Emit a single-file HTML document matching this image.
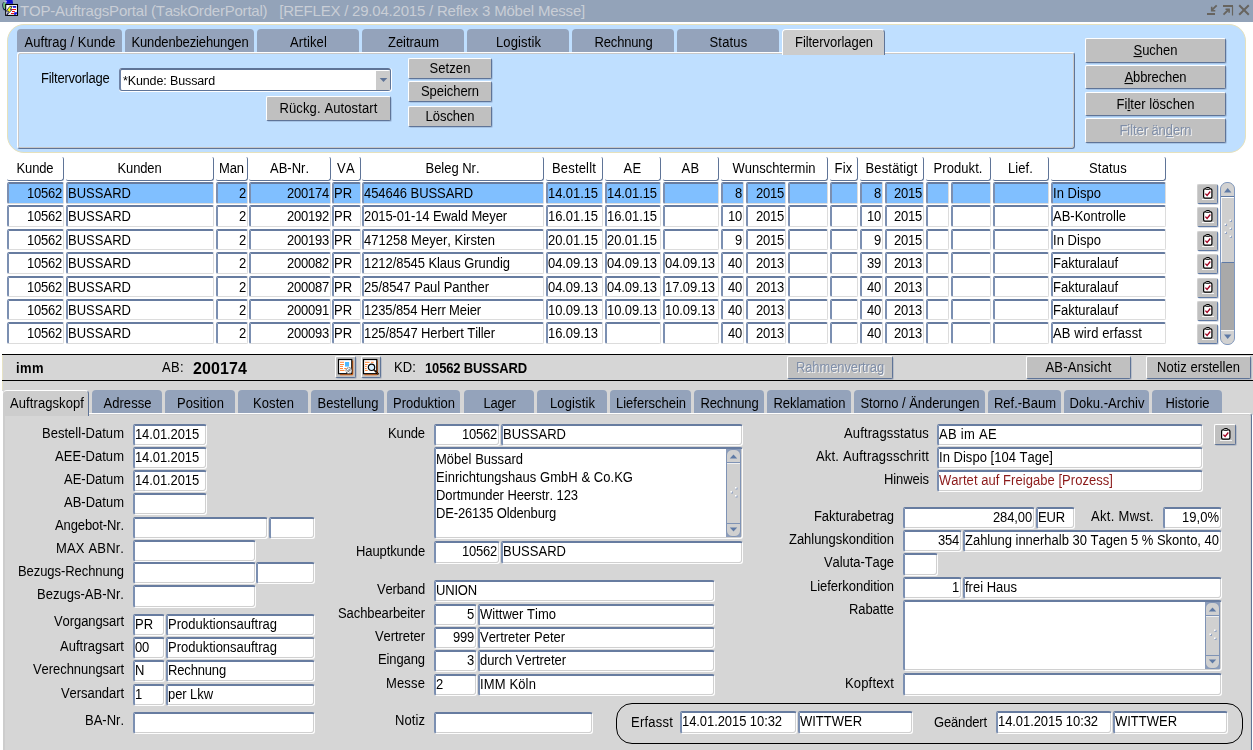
<!DOCTYPE html><html><head><meta charset="utf-8"><title>TOP-AuftragsPortal</title><style>
*{box-sizing:border-box;margin:0;padding:0}
html,body{width:1253px;height:750px;overflow:hidden;background:#fff}
body{font-kerning:none;font-family:"Liberation Sans",sans-serif;font-size:13px;color:#000;position:relative}
.a{position:absolute;white-space:nowrap;overflow:hidden}
.t{position:absolute;white-space:nowrap;line-height:16px;height:16px;transform:scaleY(1.065);transform-origin:0 12.5px}
.f{position:absolute;white-space:nowrap;overflow:hidden;background:#fff;border-top:2px solid #677ca0;border-left:2px solid #7b8fb1;border-right:1px solid #fdfdfd;border-bottom:1px solid #fdfdfd;border-radius:2px 3px 3px 3px;line-height:18px;padding:0 2px 0 0;box-shadow:inset -1px -1px 0 #d0d0d0}
.f.r{text-align:right}
.f.s{background:#80bfff}
.c{position:absolute;white-space:nowrap;overflow:hidden;background:#fff;border-top:2px solid #677ca0;border-left:2px solid #7b8fb1;border-right:1px solid #dcdcdc;border-bottom:1px solid #dcdcdc;border-radius:2px;line-height:19px;padding:0 1px 0 0}
.c.r{text-align:right}
.c.s{background:#80bfff}
.h{position:absolute;white-space:nowrap;overflow:hidden;text-align:center;line-height:24px;border-right:1px solid #5f7497;border-bottom:1px solid #5f7497;border-radius:0 2px 3px 2px}
.b{position:absolute;white-space:nowrap;text-align:center;background:#c0c0c0;border-top:1px solid #fff;border-left:1px solid #fff;border-right:1px solid #5f7497;border-bottom:1px solid #5f7497;border-radius:2px;box-shadow:1px 1px 0 rgba(95,116,151,.25)}
.b.d{color:#7f8ea8;text-shadow:1px 1px 0 #f4f4f4}
.tab{position:absolute;white-space:nowrap;overflow:hidden;text-align:center;padding-left:1px;background:#94a3bb;border-radius:4px 4px 0 0}
.tab.sel{background:#cdcdcd}
u{text-decoration:underline}
.y{display:inline-block;line-height:16px;transform:scaleY(1.065);transform-origin:0 12.5px}
</style></head><body>
<div class="a" style="left:0px;top:0px;width:1253px;height:22px;background:#93a3b9"></div>
<div class="a" style="left:20px;top:0;height:22px;line-height:21px;font-size:15px;color:#c9ced6;letter-spacing:-0.214px;">TOP-AuftragsPortal (TaskOrderPortal)   [REFLEX / 29.04.2015 / Reflex 3 Möbel Messe]</div>
<svg class="a" style="left:0;top:0;width:20px;height:18px" viewBox="0 0 20 18"><path d="M3 2.5C1.8 4 2 7.5 4 10.5l2-1V2z" fill="#101040"/><path d="M3.4 3C5 1.2 6 2 6 3v5.5L4.2 9C3 7 2.8 4.5 3.4 3z" fill="#70c080"/><path d="M5.5 0h7l.6 3.8H6z" fill="#1010d0"/><path d="M4 1.2l2-.9 1.2 1.2L6 3z" fill="#b8b0e8"/><rect x="5.7" y="4.5" width="11.8" height="10.9" fill="#fff" stroke="#000" stroke-width="1.1"/><rect x="13" y="6.1" width="3.2" height="1.6" fill="#0000d8"/><rect x="12" y="9" width="4" height="1" fill="#f01010"/><rect x="12" y="11" width="2.8" height="1" fill="#f01010"/><rect x="11" y="13" width="3" height="1" fill="#f01010"/><rect x="14.2" y="12.3" width="2.8" height="2.6" fill="#0000d8"/><rect x="15.8" y="13.8" width="1" height="1" fill="#fff"/><path d="M9.8 6.4h2.4L10.4 9.6H12L6.8 15.2 8.6 11.2H6.2z" fill="#ffff00" stroke="#101070" stroke-width=".8"/></svg>
<svg class="a" style="left:1205px;top:3px;width:46px;height:14px" viewBox="0 0 46 14"><g stroke="#67645f" fill="none"><path d="M2 11h8" stroke-width="2"/><path d="M11.7 2.3L6.8 7.2" stroke-width="1.8"/><path d="M6.7 3.8v3.9h3.6" stroke-width="1.6"/><path d="M18 3h10" stroke-width="2"/><path d="M27.5 3v9.5" stroke-width="1.2"/><path d="M18.5 11.7l5.2-5.2" stroke-width="1.8"/><path d="M20.5 6.2h3.6v3.6" stroke-width="1.6"/><path d="M34.2 2.2l9.6 9.6M43.8 2.2l-9.6 9.6" stroke-width="2"/></g></svg>
<div class="a" style="left:7px;top:24px;width:1239px;height:129px;background:#bfdfff;border-radius:17px;border:1px solid #e6e1bc"></div>
<div class="tab" style="left:17px;top:29px;width:105px;height:23px;letter-spacing:0.044px;line-height:27px"><span class="y">Auftrag / Kunde</span></div>
<div class="tab" style="left:125px;top:29px;width:129px;height:23px;letter-spacing:-0.134px;line-height:27px"><span class="y">Kundenbeziehungen</span></div>
<div class="tab" style="left:257px;top:29px;width:102px;height:23px;letter-spacing:0.126px;line-height:27px"><span class="y">Artikel</span></div>
<div class="tab" style="left:362px;top:29px;width:102px;height:23px;letter-spacing:-0.036px;line-height:27px"><span class="y">Zeitraum</span></div>
<div class="tab" style="left:467px;top:29px;width:102px;height:23px;letter-spacing:0.115px;line-height:27px"><span class="y">Logistik</span></div>
<div class="tab" style="left:572px;top:29px;width:102px;height:23px;letter-spacing:-0.159px;line-height:27px"><span class="y">Rechnung</span></div>
<div class="tab" style="left:677px;top:29px;width:102px;height:23px;letter-spacing:0.191px;line-height:27px"><span class="y">Status</span></div>
<div class="a" style="left:17px;top:52px;width:1058px;height:97px;border-top:1px solid #fff;border-left:1px solid #fff;border-right:1px solid #5f7497;border-bottom:1px solid #5f7497;border-radius:3px;box-shadow:inset 1px 1px 0 #c8c8c8,inset -1px -1px 0 #c8c8c8"></div>
<div class="tab sel" style="left:782px;top:29px;width:103px;height:26px;letter-spacing:-0.054px;line-height:26px;border-top:1px solid #fff;border-left:1px solid #fff;border-right:1px solid #5f7497;background:#cccccc"><span class="y">Filtervorlagen</span></div>
<div class="t" style="left:41px;top:71.0px;letter-spacing:-0.233px;">Filtervorlage</div>
<div class="a" style="left:119px;top:68px;width:273px;height:24px;background:#fff;border-radius:3px"></div>
<div class="a" style="left:119px;top:68px;width:272px;height:23px;letter-spacing:-0.121px;background:#fff;border-top:2px solid #5f7497;border-left:2px solid #6f83a6;border-right:1px solid #5f7497;border-bottom:1px solid #5f7497;border-radius:3px;line-height:22px;padding-left:2px;font-size:12.5px"><span class="y">*Kunde: Bussard</span></div>
<div class="a" style="left:376px;top:71px;width:14px;height:19px;background:#cbcbcb"></div>
<svg class="a" style="left:379px;top:77px;width:9px;height:6px" viewBox="0 0 9 6"><path d="M0.7 0.9h7.6L4.5 5z" fill="#5f7497"/></svg>
<div class="b" style="left:266px;top:96px;width:125px;height:25px;letter-spacing:0.119px;line-height:24px"><span class="y">Rückg. Autostart</span></div>
<div class="b" style="left:408px;top:58px;width:84px;height:21px;letter-spacing:0.088px;line-height:20px"><span class="y">Setzen</span></div>
<div class="b" style="left:408px;top:81px;width:84px;height:21px;letter-spacing:-0.060px;line-height:20px"><span class="y">Speichern</span></div>
<div class="b" style="left:408px;top:106px;width:84px;height:21px;letter-spacing:-0.021px;line-height:20px"><span class="y">Löschen</span></div>
<div class="b" style="left:1085px;top:38px;width:141px;height:25px;letter-spacing:-0.015px;line-height:23px"><span class="y"><u>S</u>uchen</span></div>
<div class="b" style="left:1085px;top:65px;width:141px;height:24px;letter-spacing:-0.098px;line-height:23px"><span class="y"><u>A</u>bbrechen</span></div>
<div class="b" style="left:1085px;top:92px;width:141px;height:24px;letter-spacing:0.049px;line-height:23px"><span class="y">Fi<u>l</u>ter löschen</span></div>
<div class="b d" style="left:1085px;top:118px;width:141px;height:25px;letter-spacing:-0.075px;line-height:23px"><span class="y">Filter än<u>d</u>ern</span></div>
<div class="h" style="left:7px;top:157px;width:57px;height:24px;letter-spacing:-0.118px;"><span class="y">Kunde</span></div>
<div class="h" style="left:66px;top:157px;width:148px;height:24px;letter-spacing:-0.137px;"><span class="y">Kunden</span></div>
<div class="h" style="left:216px;top:157px;width:32px;height:24px;letter-spacing:-0.096px;"><span class="y">Man</span></div>
<div class="h" style="left:249px;top:157px;width:82px;height:24px;letter-spacing:0.000px;"><span class="y">AB-Nr.</span></div>
<div class="h" style="left:332px;top:157px;width:29px;height:24px;letter-spacing:0.329px;"><span class="y">VA</span></div>
<div class="h" style="left:362px;top:157px;width:182px;height:24px;letter-spacing:-0.021px;"><span class="y">Beleg Nr.</span></div>
<div class="h" style="left:546px;top:157px;width:57px;height:24px;letter-spacing:0.171px;"><span class="y">Bestellt</span></div>
<div class="h" style="left:605px;top:157px;width:56px;height:24px;letter-spacing:0.329px;"><span class="y">AE</span></div>
<div class="h" style="left:663px;top:157px;width:56px;height:24px;letter-spacing:0.329px;"><span class="y">AB</span></div>
<div class="h" style="left:721px;top:157px;width:107px;height:24px;letter-spacing:-0.007px;"><span class="y">Wunschtermin</span></div>
<div class="h" style="left:830px;top:157px;width:28px;height:24px;letter-spacing:0.224px;"><span class="y">Fix</span></div>
<div class="h" style="left:860px;top:157px;width:64px;height:24px;letter-spacing:0.157px;"><span class="y">Bestätigt</span></div>
<div class="h" style="left:926px;top:157px;width:65px;height:24px;letter-spacing:0.073px;"><span class="y">Produkt.</span></div>
<div class="h" style="left:993px;top:157px;width:56px;height:24px;letter-spacing:0.086px;"><span class="y">Lief.</span></div>
<div class="h" style="left:1051px;top:157px;width:115px;height:24px;letter-spacing:0.191px;"><span class="y">Status</span></div>
<div class="c r s" style="left:7px;top:182px;width:57px;height:22px;letter-spacing:-0.230px;"><span class="y">10562</span></div>
<div class="c  s" style="left:66px;top:182px;width:148px;height:22px;letter-spacing:0.022px;"><span class="y">BUSSARD</span></div>
<div class="c r s" style="left:216px;top:182px;width:32px;height:22px;letter-spacing:-0.230px;"><span class="y">2</span></div>
<div class="c r s" style="left:249px;top:182px;width:82px;height:22px;letter-spacing:-0.230px;"><span class="y">200174</span></div>
<div class="c  s" style="left:332px;top:182px;width:29px;height:22px;letter-spacing:-0.030px;"><span class="y">PR</span></div>
<div class="c  s" style="left:362px;top:182px;width:182px;height:22px;letter-spacing:-0.060px;"><span class="y">454646 BUSSARD</span></div>
<div class="c  s" style="left:546px;top:182px;width:57px;height:22px;letter-spacing:-0.075px;"><span class="y">14.01.15</span></div>
<div class="c  s" style="left:605px;top:182px;width:56px;height:22px;letter-spacing:-0.075px;"><span class="y">14.01.15</span></div>
<div class="c  s" style="left:663px;top:182px;width:56px;height:22px;"></div>
<div class="c r s" style="left:721px;top:182px;width:23px;height:22px;letter-spacing:-0.230px;"><span class="y">8</span></div>
<div class="c r s" style="left:746px;top:182px;width:40px;height:22px;letter-spacing:-0.230px;"><span class="y">2015</span></div>
<div class="c  s" style="left:788px;top:182px;width:40px;height:22px;"></div>
<div class="c  s" style="left:830px;top:182px;width:28px;height:22px;"></div>
<div class="c r s" style="left:860px;top:182px;width:23px;height:22px;letter-spacing:-0.230px;"><span class="y">8</span></div>
<div class="c r s" style="left:885px;top:182px;width:39px;height:22px;letter-spacing:-0.230px;"><span class="y">2015</span></div>
<div class="c  s" style="left:926px;top:182px;width:23px;height:22px;"></div>
<div class="c  s" style="left:951px;top:182px;width:40px;height:22px;"></div>
<div class="c  s" style="left:993px;top:182px;width:56px;height:22px;"></div>
<div class="c  s" style="left:1051px;top:182px;width:115px;height:22px;letter-spacing:0.039px;"><span class="y">In Dispo</span></div>
<div class="b" style="left:1197px;top:184px;width:21px;height:20px;border-top-color:#d0d0d0;border-left-color:#d0d0d0;border-right:1px solid #5f7aa5;border-bottom:1px solid #5f7aa5"></div>
<svg class="a" style="left:1202px;top:187px;width:12px;height:13px" viewBox="0 0 12 13"><path d="M0 12.5h12" stroke="#f4f4f4"/><rect x="1.6" y="1.9" width="8.3" height="9.2" rx="1.3" fill="#fff" stroke="#000" stroke-width="1.2"/><rect x="3.7" y="0.5" width="4.1" height="1.7" rx=".8" fill="#fff" stroke="#000" stroke-width="1"/><path d="M3.4 6.6l1.7 1.9 3.2-4" fill="none" stroke="#a00020" stroke-width="1.3"/></svg>
<div class="c r" style="left:7px;top:205px;width:57px;height:22px;letter-spacing:-0.230px;"><span class="y">10562</span></div>
<div class="c " style="left:66px;top:205px;width:148px;height:22px;letter-spacing:0.022px;"><span class="y">BUSSARD</span></div>
<div class="c r" style="left:216px;top:205px;width:32px;height:22px;letter-spacing:-0.230px;"><span class="y">2</span></div>
<div class="c r" style="left:249px;top:205px;width:82px;height:22px;letter-spacing:-0.230px;"><span class="y">200192</span></div>
<div class="c " style="left:332px;top:205px;width:29px;height:22px;letter-spacing:-0.030px;"><span class="y">PR</span></div>
<div class="c " style="left:362px;top:205px;width:182px;height:22px;letter-spacing:-0.102px;"><span class="y">2015-01-14 Ewald Meyer</span></div>
<div class="c " style="left:546px;top:205px;width:57px;height:22px;letter-spacing:-0.075px;"><span class="y">16.01.15</span></div>
<div class="c " style="left:605px;top:205px;width:56px;height:22px;letter-spacing:-0.075px;"><span class="y">16.01.15</span></div>
<div class="c " style="left:663px;top:205px;width:56px;height:22px;"></div>
<div class="c r" style="left:721px;top:205px;width:23px;height:22px;letter-spacing:-0.230px;"><span class="y">10</span></div>
<div class="c r" style="left:746px;top:205px;width:40px;height:22px;letter-spacing:-0.230px;"><span class="y">2015</span></div>
<div class="c " style="left:788px;top:205px;width:40px;height:22px;"></div>
<div class="c " style="left:830px;top:205px;width:28px;height:22px;"></div>
<div class="c r" style="left:860px;top:205px;width:23px;height:22px;letter-spacing:-0.230px;"><span class="y">10</span></div>
<div class="c r" style="left:885px;top:205px;width:39px;height:22px;letter-spacing:-0.230px;"><span class="y">2015</span></div>
<div class="c " style="left:926px;top:205px;width:23px;height:22px;"></div>
<div class="c " style="left:951px;top:205px;width:40px;height:22px;"></div>
<div class="c " style="left:993px;top:205px;width:56px;height:22px;"></div>
<div class="c " style="left:1051px;top:205px;width:115px;height:22px;letter-spacing:0.002px;"><span class="y">AB-Kontrolle</span></div>
<div class="b" style="left:1197px;top:207px;width:21px;height:20px;border-top-color:#d0d0d0;border-left-color:#d0d0d0;border-right:1px solid #5f7aa5;border-bottom:1px solid #5f7aa5"></div>
<svg class="a" style="left:1202px;top:210px;width:12px;height:13px" viewBox="0 0 12 13"><path d="M0 12.5h12" stroke="#f4f4f4"/><rect x="1.6" y="1.9" width="8.3" height="9.2" rx="1.3" fill="#fff" stroke="#000" stroke-width="1.2"/><rect x="3.7" y="0.5" width="4.1" height="1.7" rx=".8" fill="#fff" stroke="#000" stroke-width="1"/><path d="M3.4 6.6l1.7 1.9 3.2-4" fill="none" stroke="#a00020" stroke-width="1.3"/></svg>
<div class="c r" style="left:7px;top:229px;width:57px;height:21px;letter-spacing:-0.230px;"><span class="y">10562</span></div>
<div class="c " style="left:66px;top:229px;width:148px;height:21px;letter-spacing:0.022px;"><span class="y">BUSSARD</span></div>
<div class="c r" style="left:216px;top:229px;width:32px;height:21px;letter-spacing:-0.230px;"><span class="y">2</span></div>
<div class="c r" style="left:249px;top:229px;width:82px;height:21px;letter-spacing:-0.230px;"><span class="y">200193</span></div>
<div class="c " style="left:332px;top:229px;width:29px;height:21px;letter-spacing:-0.030px;"><span class="y">PR</span></div>
<div class="c " style="left:362px;top:229px;width:182px;height:21px;letter-spacing:0.010px;"><span class="y">471258 Meyer, Kirsten</span></div>
<div class="c " style="left:546px;top:229px;width:57px;height:21px;letter-spacing:-0.075px;"><span class="y">20.01.15</span></div>
<div class="c " style="left:605px;top:229px;width:56px;height:21px;letter-spacing:-0.075px;"><span class="y">20.01.15</span></div>
<div class="c " style="left:663px;top:229px;width:56px;height:21px;"></div>
<div class="c r" style="left:721px;top:229px;width:23px;height:21px;letter-spacing:-0.230px;"><span class="y">9</span></div>
<div class="c r" style="left:746px;top:229px;width:40px;height:21px;letter-spacing:-0.230px;"><span class="y">2015</span></div>
<div class="c " style="left:788px;top:229px;width:40px;height:21px;"></div>
<div class="c " style="left:830px;top:229px;width:28px;height:21px;"></div>
<div class="c r" style="left:860px;top:229px;width:23px;height:21px;letter-spacing:-0.230px;"><span class="y">9</span></div>
<div class="c r" style="left:885px;top:229px;width:39px;height:21px;letter-spacing:-0.230px;"><span class="y">2015</span></div>
<div class="c " style="left:926px;top:229px;width:23px;height:21px;"></div>
<div class="c " style="left:951px;top:229px;width:40px;height:21px;"></div>
<div class="c " style="left:993px;top:229px;width:56px;height:21px;"></div>
<div class="c " style="left:1051px;top:229px;width:115px;height:21px;letter-spacing:0.039px;"><span class="y">In Dispo</span></div>
<div class="b" style="left:1197px;top:231px;width:21px;height:20px;border-top-color:#d0d0d0;border-left-color:#d0d0d0;border-right:1px solid #5f7aa5;border-bottom:1px solid #5f7aa5"></div>
<svg class="a" style="left:1202px;top:234px;width:12px;height:13px" viewBox="0 0 12 13"><path d="M0 12.5h12" stroke="#f4f4f4"/><rect x="1.6" y="1.9" width="8.3" height="9.2" rx="1.3" fill="#fff" stroke="#000" stroke-width="1.2"/><rect x="3.7" y="0.5" width="4.1" height="1.7" rx=".8" fill="#fff" stroke="#000" stroke-width="1"/><path d="M3.4 6.6l1.7 1.9 3.2-4" fill="none" stroke="#a00020" stroke-width="1.3"/></svg>
<div class="c r" style="left:7px;top:252px;width:57px;height:22px;letter-spacing:-0.230px;"><span class="y">10562</span></div>
<div class="c " style="left:66px;top:252px;width:148px;height:22px;letter-spacing:0.022px;"><span class="y">BUSSARD</span></div>
<div class="c r" style="left:216px;top:252px;width:32px;height:22px;letter-spacing:-0.230px;"><span class="y">2</span></div>
<div class="c r" style="left:249px;top:252px;width:82px;height:22px;letter-spacing:-0.230px;"><span class="y">200082</span></div>
<div class="c " style="left:332px;top:252px;width:29px;height:22px;letter-spacing:-0.030px;"><span class="y">PR</span></div>
<div class="c " style="left:362px;top:252px;width:182px;height:22px;letter-spacing:-0.063px;"><span class="y">1212/8545 Klaus Grundig</span></div>
<div class="c " style="left:546px;top:252px;width:57px;height:22px;letter-spacing:-0.075px;"><span class="y">04.09.13</span></div>
<div class="c " style="left:605px;top:252px;width:56px;height:22px;letter-spacing:-0.075px;"><span class="y">04.09.13</span></div>
<div class="c " style="left:663px;top:252px;width:56px;height:22px;letter-spacing:-0.075px;"><span class="y">04.09.13</span></div>
<div class="c r" style="left:721px;top:252px;width:23px;height:22px;letter-spacing:-0.230px;"><span class="y">40</span></div>
<div class="c r" style="left:746px;top:252px;width:40px;height:22px;letter-spacing:-0.230px;"><span class="y">2013</span></div>
<div class="c " style="left:788px;top:252px;width:40px;height:22px;"></div>
<div class="c " style="left:830px;top:252px;width:28px;height:22px;"></div>
<div class="c r" style="left:860px;top:252px;width:23px;height:22px;letter-spacing:-0.230px;"><span class="y">39</span></div>
<div class="c r" style="left:885px;top:252px;width:39px;height:22px;letter-spacing:-0.230px;"><span class="y">2013</span></div>
<div class="c " style="left:926px;top:252px;width:23px;height:22px;"></div>
<div class="c " style="left:951px;top:252px;width:40px;height:22px;"></div>
<div class="c " style="left:993px;top:252px;width:56px;height:22px;"></div>
<div class="c " style="left:1051px;top:252px;width:115px;height:22px;letter-spacing:-0.003px;"><span class="y">Fakturalauf</span></div>
<div class="b" style="left:1197px;top:254px;width:21px;height:20px;border-top-color:#d0d0d0;border-left-color:#d0d0d0;border-right:1px solid #5f7aa5;border-bottom:1px solid #5f7aa5"></div>
<svg class="a" style="left:1202px;top:257px;width:12px;height:13px" viewBox="0 0 12 13"><path d="M0 12.5h12" stroke="#f4f4f4"/><rect x="1.6" y="1.9" width="8.3" height="9.2" rx="1.3" fill="#fff" stroke="#000" stroke-width="1.2"/><rect x="3.7" y="0.5" width="4.1" height="1.7" rx=".8" fill="#fff" stroke="#000" stroke-width="1"/><path d="M3.4 6.6l1.7 1.9 3.2-4" fill="none" stroke="#a00020" stroke-width="1.3"/></svg>
<div class="c r" style="left:7px;top:276px;width:57px;height:21px;letter-spacing:-0.230px;"><span class="y">10562</span></div>
<div class="c " style="left:66px;top:276px;width:148px;height:21px;letter-spacing:0.022px;"><span class="y">BUSSARD</span></div>
<div class="c r" style="left:216px;top:276px;width:32px;height:21px;letter-spacing:-0.230px;"><span class="y">2</span></div>
<div class="c r" style="left:249px;top:276px;width:82px;height:21px;letter-spacing:-0.230px;"><span class="y">200087</span></div>
<div class="c " style="left:332px;top:276px;width:29px;height:21px;letter-spacing:-0.030px;"><span class="y">PR</span></div>
<div class="c " style="left:362px;top:276px;width:182px;height:21px;letter-spacing:-0.038px;"><span class="y">25/8547 Paul Panther</span></div>
<div class="c " style="left:546px;top:276px;width:57px;height:21px;letter-spacing:-0.075px;"><span class="y">04.09.13</span></div>
<div class="c " style="left:605px;top:276px;width:56px;height:21px;letter-spacing:-0.075px;"><span class="y">04.09.13</span></div>
<div class="c " style="left:663px;top:276px;width:56px;height:21px;letter-spacing:-0.075px;"><span class="y">17.09.13</span></div>
<div class="c r" style="left:721px;top:276px;width:23px;height:21px;letter-spacing:-0.230px;"><span class="y">40</span></div>
<div class="c r" style="left:746px;top:276px;width:40px;height:21px;letter-spacing:-0.230px;"><span class="y">2013</span></div>
<div class="c " style="left:788px;top:276px;width:40px;height:21px;"></div>
<div class="c " style="left:830px;top:276px;width:28px;height:21px;"></div>
<div class="c r" style="left:860px;top:276px;width:23px;height:21px;letter-spacing:-0.230px;"><span class="y">40</span></div>
<div class="c r" style="left:885px;top:276px;width:39px;height:21px;letter-spacing:-0.230px;"><span class="y">2013</span></div>
<div class="c " style="left:926px;top:276px;width:23px;height:21px;"></div>
<div class="c " style="left:951px;top:276px;width:40px;height:21px;"></div>
<div class="c " style="left:993px;top:276px;width:56px;height:21px;"></div>
<div class="c " style="left:1051px;top:276px;width:115px;height:21px;letter-spacing:-0.003px;"><span class="y">Fakturalauf</span></div>
<div class="b" style="left:1197px;top:278px;width:21px;height:20px;border-top-color:#d0d0d0;border-left-color:#d0d0d0;border-right:1px solid #5f7aa5;border-bottom:1px solid #5f7aa5"></div>
<svg class="a" style="left:1202px;top:281px;width:12px;height:13px" viewBox="0 0 12 13"><path d="M0 12.5h12" stroke="#f4f4f4"/><rect x="1.6" y="1.9" width="8.3" height="9.2" rx="1.3" fill="#fff" stroke="#000" stroke-width="1.2"/><rect x="3.7" y="0.5" width="4.1" height="1.7" rx=".8" fill="#fff" stroke="#000" stroke-width="1"/><path d="M3.4 6.6l1.7 1.9 3.2-4" fill="none" stroke="#a00020" stroke-width="1.3"/></svg>
<div class="c r" style="left:7px;top:299px;width:57px;height:21px;letter-spacing:-0.230px;"><span class="y">10562</span></div>
<div class="c " style="left:66px;top:299px;width:148px;height:21px;letter-spacing:0.022px;"><span class="y">BUSSARD</span></div>
<div class="c r" style="left:216px;top:299px;width:32px;height:21px;letter-spacing:-0.230px;"><span class="y">2</span></div>
<div class="c r" style="left:249px;top:299px;width:82px;height:21px;letter-spacing:-0.230px;"><span class="y">200091</span></div>
<div class="c " style="left:332px;top:299px;width:29px;height:21px;letter-spacing:-0.030px;"><span class="y">PR</span></div>
<div class="c " style="left:362px;top:299px;width:182px;height:21px;letter-spacing:-0.117px;"><span class="y">1235/854 Herr Meier</span></div>
<div class="c " style="left:546px;top:299px;width:57px;height:21px;letter-spacing:-0.075px;"><span class="y">10.09.13</span></div>
<div class="c " style="left:605px;top:299px;width:56px;height:21px;letter-spacing:-0.075px;"><span class="y">10.09.13</span></div>
<div class="c " style="left:663px;top:299px;width:56px;height:21px;letter-spacing:-0.075px;"><span class="y">10.09.13</span></div>
<div class="c r" style="left:721px;top:299px;width:23px;height:21px;letter-spacing:-0.230px;"><span class="y">40</span></div>
<div class="c r" style="left:746px;top:299px;width:40px;height:21px;letter-spacing:-0.230px;"><span class="y">2013</span></div>
<div class="c " style="left:788px;top:299px;width:40px;height:21px;"></div>
<div class="c " style="left:830px;top:299px;width:28px;height:21px;"></div>
<div class="c r" style="left:860px;top:299px;width:23px;height:21px;letter-spacing:-0.230px;"><span class="y">40</span></div>
<div class="c r" style="left:885px;top:299px;width:39px;height:21px;letter-spacing:-0.230px;"><span class="y">2013</span></div>
<div class="c " style="left:926px;top:299px;width:23px;height:21px;"></div>
<div class="c " style="left:951px;top:299px;width:40px;height:21px;"></div>
<div class="c " style="left:993px;top:299px;width:56px;height:21px;"></div>
<div class="c " style="left:1051px;top:299px;width:115px;height:21px;letter-spacing:-0.003px;"><span class="y">Fakturalauf</span></div>
<div class="b" style="left:1197px;top:301px;width:21px;height:20px;border-top-color:#d0d0d0;border-left-color:#d0d0d0;border-right:1px solid #5f7aa5;border-bottom:1px solid #5f7aa5"></div>
<svg class="a" style="left:1202px;top:304px;width:12px;height:13px" viewBox="0 0 12 13"><path d="M0 12.5h12" stroke="#f4f4f4"/><rect x="1.6" y="1.9" width="8.3" height="9.2" rx="1.3" fill="#fff" stroke="#000" stroke-width="1.2"/><rect x="3.7" y="0.5" width="4.1" height="1.7" rx=".8" fill="#fff" stroke="#000" stroke-width="1"/><path d="M3.4 6.6l1.7 1.9 3.2-4" fill="none" stroke="#a00020" stroke-width="1.3"/></svg>
<div class="c r" style="left:7px;top:322px;width:57px;height:22px;letter-spacing:-0.230px;"><span class="y">10562</span></div>
<div class="c " style="left:66px;top:322px;width:148px;height:22px;letter-spacing:0.022px;"><span class="y">BUSSARD</span></div>
<div class="c r" style="left:216px;top:322px;width:32px;height:22px;letter-spacing:-0.230px;"><span class="y">2</span></div>
<div class="c r" style="left:249px;top:322px;width:82px;height:22px;letter-spacing:-0.230px;"><span class="y">200093</span></div>
<div class="c " style="left:332px;top:322px;width:29px;height:22px;letter-spacing:-0.030px;"><span class="y">PR</span></div>
<div class="c " style="left:362px;top:322px;width:182px;height:22px;letter-spacing:-0.085px;"><span class="y">125/8547 Herbert Tiller</span></div>
<div class="c " style="left:546px;top:322px;width:57px;height:22px;letter-spacing:-0.075px;"><span class="y">16.09.13</span></div>
<div class="c " style="left:605px;top:322px;width:56px;height:22px;"></div>
<div class="c " style="left:663px;top:322px;width:56px;height:22px;"></div>
<div class="c r" style="left:721px;top:322px;width:23px;height:22px;letter-spacing:-0.230px;"><span class="y">40</span></div>
<div class="c r" style="left:746px;top:322px;width:40px;height:22px;letter-spacing:-0.230px;"><span class="y">2013</span></div>
<div class="c " style="left:788px;top:322px;width:40px;height:22px;"></div>
<div class="c " style="left:830px;top:322px;width:28px;height:22px;"></div>
<div class="c r" style="left:860px;top:322px;width:23px;height:22px;letter-spacing:-0.230px;"><span class="y">40</span></div>
<div class="c r" style="left:885px;top:322px;width:39px;height:22px;letter-spacing:-0.230px;"><span class="y">2013</span></div>
<div class="c " style="left:926px;top:322px;width:23px;height:22px;"></div>
<div class="c " style="left:951px;top:322px;width:40px;height:22px;"></div>
<div class="c " style="left:993px;top:322px;width:56px;height:22px;"></div>
<div class="c " style="left:1051px;top:322px;width:115px;height:22px;letter-spacing:0.106px;"><span class="y">AB wird erfasst</span></div>
<div class="b" style="left:1197px;top:324px;width:21px;height:20px;border-top-color:#d0d0d0;border-left-color:#d0d0d0;border-right:1px solid #5f7aa5;border-bottom:1px solid #5f7aa5"></div>
<svg class="a" style="left:1202px;top:327px;width:12px;height:13px" viewBox="0 0 12 13"><path d="M0 12.5h12" stroke="#f4f4f4"/><rect x="1.6" y="1.9" width="8.3" height="9.2" rx="1.3" fill="#fff" stroke="#000" stroke-width="1.2"/><rect x="3.7" y="0.5" width="4.1" height="1.7" rx=".8" fill="#fff" stroke="#000" stroke-width="1"/><path d="M3.4 6.6l1.7 1.9 3.2-4" fill="none" stroke="#a00020" stroke-width="1.3"/></svg>
<div class="a" style="left:1220px;top:182px;width:15px;height:163px;background:#a9a9a9;border-radius:7px;border:1px solid #7f98c0"></div>
<div class="a" style="left:1221px;top:183px;width:13px;height:14px;background:#d2d2d2;border-radius:6px 6px 0 0;border-bottom:1px solid #5f7aa5"></div>
<div class="a" style="left:1221px;top:197px;width:13px;height:66px;background:#cfcfcf;border-top:1px solid #fff;border-left:1px solid #f4f4f4;border-bottom:1px solid #5f7aa5"></div>
<div class="a" style="left:1221px;top:330px;width:13px;height:14px;background:#d2d2d2;border-radius:0 0 6px 6px;border-top:1px solid #f4f4f4"></div>
<svg class="a" style="left:1221px;top:183px;width:13px;height:161px" viewBox="0 0 13 161"><path d="M3 9.5h7.4L6.7 5z" fill="#5f7aa5"/><path d="M3 151.5h7.4L6.7 156z" fill="#5f7aa5"/><g fill="#8ea0c0"><rect x="9" y="37" width="2" height="2"/><rect x="4" y="41" width="2" height="2"/><rect x="9" y="45" width="2" height="2"/><rect x="4" y="49" width="2" height="2"/><rect x="9" y="53" width="2" height="2"/></g><g fill="#fff"><rect x="8.5" y="36.5" width="1.6" height="1.6"/><rect x="3.5" y="40.5" width="1.6" height="1.6"/><rect x="8.5" y="44.5" width="1.6" height="1.6"/><rect x="3.5" y="48.5" width="1.6" height="1.6"/><rect x="8.5" y="52.5" width="1.6" height="1.6"/></g></svg>
<div class="a" style="left:2px;top:354px;width:1251px;height:37px;background:#d6d6d6"></div>
<div class="a" style="left:3px;top:390px;width:1250px;height:360px;background:#d6d6d6"></div>
<div class="a" style="left:1252px;top:415px;width:1px;height:335px;background:#fff"></div>
<div class="a" style="left:2px;top:354px;width:1px;height:36px;background:#e6e2c4"></div>
<div class="a" style="left:2px;top:354px;width:1251px;height:1px;background:#000"></div>
<div class="a" style="left:2px;top:380px;width:1251px;height:1px;background:#000"></div>
<div class="t" style="left:16px;top:360.5px;letter-spacing:0.423px;font-weight:bold">imm</div>
<div class="t" style="left:162px;top:359.5px;letter-spacing:0.349px;">AB:</div>
<div class="t" style="left:193px;top:362.0px;letter-spacing:0.102px;font-weight:bold;font-size:16px;line-height:18px;height:18px;margin-top:-2.5px">200174</div>
<div class="t" style="left:394px;top:359.5px;letter-spacing:0.110px;">KD:</div>
<div class="t" style="left:425px;top:360.5px;letter-spacing:-0.157px;font-weight:bold">10562 BUSSARD</div>
<div class="b" style="left:335px;top:356px;width:21px;height:22px;"></div>
<div class="b" style="left:361px;top:356px;width:20px;height:22px;"></div>
<svg class="a" style="left:336px;top:357px;width:20px;height:20px" viewBox="0 0 20 20"><path d="M16.7 3.5v14M4 17.7h12.7" stroke="#ff6600" stroke-width="1.1"/><rect x="2.5" y="2.5" width="13.3" height="14.2" fill="#fff" stroke="#000" stroke-width="1.2"/><g stroke="#ff6600" stroke-width=".8"><path d="M4 5.3h4M4 7.5h4M4 9.4h3M4 11.5h3M8.2 11.5h2.4M4 13.4h4.6"/></g><rect x="9" y="5" width="4.1" height="4.6" fill="#4db8ff"/><circle cx="13" cy="13.7" r="3" fill="#fff" stroke="#333" stroke-width="1" stroke-dasharray="1 .7"/><path d="M11 15.5l4-4M11.3 13l2.5 2.5M12.5 12l2.3 2.3" stroke="#333" stroke-width=".6"/></svg>
<svg class="a" style="left:361px;top:357px;width:20px;height:20px" viewBox="0 0 20 20"><path d="M16.2 3.5v14M3.5 17.7h12.7" stroke="#ff6600" stroke-width="1.1"/><rect x="2.5" y="2.5" width="13.3" height="14.2" fill="#fff" stroke="#000" stroke-width="1.2"/><g stroke="#ff6600" stroke-width=".8"><path d="M4 5.3h4.6M10 5.3h2.7M4 7.5h2.6M4 9.4h1.7M4 11.5h1.7M4 13.4h2.7"/></g><circle cx="10.5" cy="10.3" r="3.2" fill="#d8f0ff" stroke="#000" stroke-width="1.2"/><path d="M12.9 12.8l4.6 4.6" stroke="#000" stroke-width="1.6"/><path d="M13.6 13.5l3.6 3.6" stroke="#ff6600" stroke-width=".7" stroke-dasharray="1 1"/></svg>
<div class="b d" style="left:787px;top:356px;width:106px;height:23px;letter-spacing:-0.123px;line-height:22px"><span class="y">Rahmenvertrag</span></div>
<div class="b" style="left:1026px;top:356px;width:105px;height:23px;letter-spacing:0.170px;line-height:22px"><span class="y">AB-Ansicht</span></div>
<div class="b" style="left:1146px;top:356px;width:105px;height:23px;letter-spacing:0.042px;line-height:22px"><span class="y">Notiz erstellen</span></div>
<div class="tab" style="left:92px;top:390px;width:70px;height:23px;letter-spacing:0.044px;line-height:27px"><span class="y">Adresse</span></div>
<div class="tab" style="left:165px;top:390px;width:70px;height:23px;letter-spacing:0.094px;line-height:27px"><span class="y">Position</span></div>
<div class="tab" style="left:238px;top:390px;width:70px;height:23px;letter-spacing:0.088px;line-height:27px"><span class="y">Kosten</span></div>
<div class="tab" style="left:311px;top:390px;width:73px;height:23px;letter-spacing:0.029px;line-height:27px"><span class="y">Bestellung</span></div>
<div class="tab" style="left:387px;top:390px;width:73px;height:23px;letter-spacing:-0.015px;line-height:27px"><span class="y">Produktion</span></div>
<div class="tab" style="left:464px;top:390px;width:70px;height:23px;letter-spacing:-0.250px;line-height:27px"><span class="y">Lager</span></div>
<div class="tab" style="left:537px;top:390px;width:70px;height:23px;letter-spacing:0.115px;line-height:27px"><span class="y">Logistik</span></div>
<div class="tab" style="left:610px;top:390px;width:81px;height:23px;letter-spacing:-0.008px;line-height:27px"><span class="y">Lieferschein</span></div>
<div class="tab" style="left:694px;top:390px;width:70px;height:23px;letter-spacing:-0.159px;line-height:27px"><span class="y">Rechnung</span></div>
<div class="tab" style="left:767px;top:390px;width:84px;height:23px;letter-spacing:-0.023px;line-height:27px"><span class="y">Reklamation</span></div>
<div class="tab" style="left:854px;top:390px;width:131px;height:23px;letter-spacing:-0.051px;line-height:27px"><span class="y">Storno / Änderungen</span></div>
<div class="tab" style="left:988px;top:390px;width:73px;height:23px;letter-spacing:-0.015px;line-height:27px"><span class="y">Ref.-Baum</span></div>
<div class="tab" style="left:1064px;top:390px;width:85px;height:23px;letter-spacing:0.049px;line-height:27px"><span class="y">Doku.-Archiv</span></div>
<div class="tab" style="left:1152px;top:390px;width:70px;height:23px;letter-spacing:-0.008px;line-height:27px"><span class="y">Historie</span></div>
<div class="a" style="left:3px;top:413px;width:1249px;height:340px;background:#d6d6d6;border-top:1px solid #fff;border-left:2px solid #cdcdcd;border-right:1px solid #5f7497;border-radius:0 3px 0 0;box-shadow:inset 0 1px 0 #cdcdcd,inset -1px 0 0 #cdcdcd"></div>
<div class="tab sel" style="left:3px;top:390px;width:86px;height:26px;letter-spacing:0.085px;line-height:26px;border-top:1px solid #fff;border-right:1px solid #5f7497;text-align:left;padding-left:7px;background:#cdcdcd"><span class="y">Auftragskopf</span></div>
<div class="t" style="right:1129px;top:426.0px;letter-spacing:0.028px;">Bestell-Datum</div>
<div class="f " style="left:133px;top:424px;width:74px;height:22px;letter-spacing:-0.106px;"><span class="y">14.01.2015</span></div>
<div class="t" style="right:1129px;top:449.0px;letter-spacing:0.041px;">AEE-Datum</div>
<div class="f " style="left:133px;top:447px;width:74px;height:22px;letter-spacing:-0.106px;"><span class="y">14.01.2015</span></div>
<div class="t" style="right:1129px;top:472.0px;letter-spacing:0.005px;">AE-Datum</div>
<div class="f " style="left:133px;top:470px;width:74px;height:22px;letter-spacing:-0.106px;"><span class="y">14.01.2015</span></div>
<div class="t" style="right:1129px;top:495.0px;letter-spacing:0.005px;">AB-Datum</div>
<div class="f " style="left:133px;top:493px;width:74px;height:22px;"></div>
<div class="t" style="right:1129px;top:518.0px;letter-spacing:-0.099px;">Angebot-Nr.</div>
<div class="f " style="left:133px;top:517px;width:135px;height:22px;"></div>
<div class="f " style="left:269px;top:517px;width:46px;height:22px;"></div>
<div class="t" style="right:1129px;top:541.0px;letter-spacing:0.172px;">MAX ABNr.</div>
<div class="f " style="left:133px;top:540px;width:123px;height:22px;"></div>
<div class="t" style="right:1129px;top:563.5px;letter-spacing:-0.064px;">Bezugs-Rechnung</div>
<div class="f " style="left:133px;top:562px;width:123px;height:22px;"></div>
<div class="f " style="left:256px;top:562px;width:59px;height:22px;"></div>
<div class="t" style="right:1129px;top:586.5px;letter-spacing:0.024px;">Bezugs-AB-Nr.</div>
<div class="f " style="left:133px;top:585px;width:123px;height:23px;"></div>
<div class="t" style="right:1129px;top:614.0px;letter-spacing:-0.075px;">Vorgangsart</div>
<div class="f " style="left:133px;top:614px;width:32px;height:22px;letter-spacing:-0.030px;"><span class="y">PR</span></div>
<div class="f " style="left:166px;top:614px;width:149px;height:22px;letter-spacing:-0.007px;"><span class="y">Produktionsauftrag</span></div>
<div class="t" style="right:1129px;top:638.75px;letter-spacing:0.038px;">Auftragsart</div>
<div class="f " style="left:133px;top:637px;width:32px;height:22px;letter-spacing:-0.230px;"><span class="y">00</span></div>
<div class="f " style="left:166px;top:637px;width:149px;height:22px;letter-spacing:-0.007px;"><span class="y">Produktionsauftrag</span></div>
<div class="t" style="right:1129px;top:661.75px;letter-spacing:-0.056px;">Verechnungsart</div>
<div class="f " style="left:133px;top:660px;width:32px;height:22px;letter-spacing:-0.388px;"><span class="y">N</span></div>
<div class="f " style="left:166px;top:660px;width:149px;height:22px;letter-spacing:-0.159px;"><span class="y">Rechnung</span></div>
<div class="t" style="right:1129px;top:686.0px;letter-spacing:-0.059px;">Versandart</div>
<div class="f " style="left:133px;top:684px;width:32px;height:22px;letter-spacing:-0.230px;"><span class="y">1</span></div>
<div class="f " style="left:166px;top:684px;width:149px;height:22px;letter-spacing:-0.074px;"><span class="y">per Lkw</span></div>
<div class="t" style="right:1129px;top:713.0px;letter-spacing:0.000px;">BA-Nr.</div>
<div class="f " style="left:133px;top:712px;width:182px;height:22px;"></div>
<div class="t" style="right:828px;top:425.5px;letter-spacing:-0.118px;">Kunde</div>
<div class="f r" style="left:434px;top:424px;width:66px;height:22px;letter-spacing:-0.230px;"><span class="y">10562</span></div>
<div class="f " style="left:501px;top:424px;width:242px;height:22px;letter-spacing:0.022px;"><span class="y">BUSSARD</span></div>
<div class="f" style="left:434px;top:447px;width:309px;height:92px;line-height:18px;padding-top:2px"><span class="y" style="letter-spacing:0.022px;">Möbel Bussard</span><br><span class="y" style="letter-spacing:0.041px;">Einrichtungshaus GmbH &amp; Co.KG</span><br><span class="y" style="letter-spacing:-0.077px;">Dortmunder Heerstr. 123</span><br><span class="y" style="letter-spacing:-0.159px;">DE-26135 Oldenburg</span></div>
<div class="a" style="left:726px;top:449px;width:15px;height:88px;background:#8c9dbb"></div>
<div class="a" style="left:726px;top:449px;width:15px;height:88px;background:#d0d0d0;border:1px solid #7f93b5;border-radius:6px"></div>
<svg class="a" style="left:726px;top:449px;width:15px;height:88px" viewBox="0 0 15 88"><path d="M3.8 9.5h7.4L7.5 5.5z" fill="#5f7aa5"/><path d="M1 13.5h13" stroke="#7f93b5"/><path d="M1 14.5h13" stroke="#f0f0f0"/><path d="M1 74.5h13" stroke="#7f93b5"/><path d="M3.8 78.5h7.4L7.5 82.5z" fill="#5f7aa5"/><g fill="#8ea0c0"><rect x="9.5" y="38.5" width="2" height="2"/><rect x="5" y="42.5" width="2" height="2"/><rect x="9.5" y="46.5" width="2" height="2"/></g><g fill="#fff"><rect x="9" y="38.0" width="1.6" height="1.6"/><rect x="4.5" y="42.0" width="1.6" height="1.6"/><rect x="9" y="46.0" width="1.6" height="1.6"/></g></svg>
<div class="t" style="right:828px;top:543.5px;letter-spacing:-0.111px;">Hauptkunde</div>
<div class="f r" style="left:434px;top:541px;width:66px;height:23px;letter-spacing:-0.230px;"><span class="y">10562</span></div>
<div class="f " style="left:501px;top:541px;width:242px;height:23px;letter-spacing:0.022px;"><span class="y">BUSSARD</span></div>
<div class="t" style="right:828px;top:581.5px;letter-spacing:-0.164px;">Verband</div>
<div class="f " style="left:434px;top:580px;width:281px;height:22px;letter-spacing:-0.178px;"><span class="y">UNION</span></div>
<div class="t" style="right:828px;top:605.5px;letter-spacing:-0.083px;">Sachbearbeiter</div>
<div class="f r" style="left:434px;top:604px;width:43px;height:22px;letter-spacing:-0.230px;"><span class="y">5</span></div>
<div class="f " style="left:478px;top:604px;width:237px;height:22px;letter-spacing:0.014px;"><span class="y">Wittwer Timo</span></div>
<div class="t" style="right:828px;top:628.5px;letter-spacing:-0.064px;">Vertreter</div>
<div class="f r" style="left:434px;top:627px;width:43px;height:22px;letter-spacing:-0.230px;"><span class="y">999</span></div>
<div class="f " style="left:478px;top:627px;width:237px;height:22px;letter-spacing:-0.017px;"><span class="y">Vertreter Peter</span></div>
<div class="t" style="right:828px;top:651.5px;letter-spacing:-0.101px;">Eingang</div>
<div class="f r" style="left:434px;top:650px;width:43px;height:22px;letter-spacing:-0.230px;"><span class="y">3</span></div>
<div class="f " style="left:478px;top:650px;width:237px;height:22px;letter-spacing:-0.047px;"><span class="y">durch Vertreter</span></div>
<div class="t" style="right:828px;top:675.5px;letter-spacing:0.142px;">Messe</div>
<div class="f " style="left:434px;top:674px;width:43px;height:22px;letter-spacing:-0.230px;"><span class="y">2</span></div>
<div class="f " style="left:478px;top:674px;width:237px;height:22px;letter-spacing:0.137px;"><span class="y">IMM Köln</span></div>
<div class="t" style="right:828px;top:713.0px;letter-spacing:0.076px;">Notiz</div>
<div class="f " style="left:434px;top:712px;width:159px;height:22px;"></div>
<div class="t" style="right:324px;top:425.5px;letter-spacing:0.136px;">Auftragsstatus</div>
<div class="f " style="left:937px;top:424px;width:266px;height:22px;letter-spacing:0.297px;"><span class="y">AB im AE</span></div>
<div class="t" style="right:324px;top:448.5px;letter-spacing:0.195px;">Akt. Auftragsschritt</div>
<div class="f " style="left:937px;top:447px;width:266px;height:22px;letter-spacing:0.029px;"><span class="y">In Dispo [104 Tage]</span></div>
<div class="t" style="right:324px;top:471.5px;letter-spacing:-0.073px;">Hinweis</div>
<div class="f " style="left:937px;top:470px;width:266px;height:22px;letter-spacing:0.045px;color:#8b1a1a"><span class="y">Wartet auf Freigabe [Prozess]</span></div>
<div class="b" style="left:1214px;top:424px;width:22px;height:21px;"></div>
<svg class="a" style="left:1219.5px;top:427.5px;width:12px;height:13px" viewBox="0 0 12 13"><path d="M0 12.5h12" stroke="#f4f4f4"/><rect x="1.6" y="1.9" width="8.3" height="9.2" rx="1.3" fill="#fff" stroke="#000" stroke-width="1.2"/><rect x="3.7" y="0.5" width="4.1" height="1.7" rx=".8" fill="#fff" stroke="#000" stroke-width="1"/><path d="M3.4 6.6l1.7 1.9 3.2-4" fill="none" stroke="#a00020" stroke-width="1.3"/></svg>
<div class="t" style="right:359px;top:509.0px;letter-spacing:-0.072px;">Fakturabetrag</div>
<div class="f r" style="left:903px;top:507px;width:132px;height:22px;letter-spacing:-0.127px;"><span class="y">284,00</span></div>
<div class="f " style="left:1036px;top:507px;width:39px;height:22px;letter-spacing:-0.149px;"><span class="y">EUR</span></div>
<div class="t" style="left:1091px;top:509.0px;letter-spacing:0.305px;">Akt. Mwst.</div>
<div class="f r" style="left:1163px;top:507px;width:59px;height:22px;letter-spacing:0.028px;"><span class="y">19,0%</span></div>
<div class="t" style="right:359px;top:532.0px;letter-spacing:-0.030px;">Zahlungskondition</div>
<div class="f r" style="left:903px;top:530px;width:59px;height:22px;letter-spacing:-0.230px;"><span class="y">354</span></div>
<div class="f " style="left:963px;top:530px;width:259px;height:22px;letter-spacing:-0.010px;"><span class="y">Zahlung innerhalb 30 Tagen 5 % Skonto, 40</span></div>
<div class="t" style="right:359px;top:555.0px;letter-spacing:-0.075px;">Valuta-Tage</div>
<div class="f " style="left:903px;top:553px;width:35px;height:23px;"></div>
<div class="t" style="right:359px;top:578.5px;letter-spacing:-0.037px;">Lieferkondition</div>
<div class="f r" style="left:903px;top:577px;width:59px;height:22px;letter-spacing:-0.230px;"><span class="y">1</span></div>
<div class="f " style="left:963px;top:577px;width:259px;height:22px;letter-spacing:-0.002px;"><span class="y">frei Haus</span></div>
<div class="t" style="right:359px;top:602.0px;letter-spacing:-0.076px;">Rabatte</div>
<div class="f" style="left:903px;top:600px;width:319px;height:71px;"></div>
<div class="a" style="left:1205px;top:602px;width:15px;height:67px;background:#8c9dbb"></div>
<div class="a" style="left:1205px;top:602px;width:15px;height:67px;background:#d0d0d0;border:1px solid #7f93b5;border-radius:6px"></div>
<svg class="a" style="left:1205px;top:602px;width:15px;height:67px" viewBox="0 0 15 67"><path d="M3.8 9.5h7.4L7.5 5.5z" fill="#5f7aa5"/><path d="M1 13.5h13" stroke="#7f93b5"/><path d="M1 14.5h13" stroke="#f0f0f0"/><path d="M1 53.5h13" stroke="#7f93b5"/><path d="M3.8 57.5h7.4L7.5 61.5z" fill="#5f7aa5"/><g fill="#8ea0c0"><rect x="9.5" y="28.0" width="2" height="2"/><rect x="5" y="32.0" width="2" height="2"/><rect x="9.5" y="36.0" width="2" height="2"/></g><g fill="#fff"><rect x="9" y="27.5" width="1.6" height="1.6"/><rect x="4.5" y="31.5" width="1.6" height="1.6"/><rect x="9" y="35.5" width="1.6" height="1.6"/></g></svg>
<div class="t" style="right:359px;top:676.0px;letter-spacing:0.163px;">Kopftext</div>
<div class="f " style="left:903px;top:673px;width:319px;height:23px;"></div>
<div class="a" style="left:616px;top:703px;width:627px;height:41px;border:1px solid #000;border-radius:16px"></div>
<div class="t" style="left:631px;top:714.5px;letter-spacing:0.221px;">Erfasst</div>
<div class="f " style="left:680px;top:711px;width:117px;height:23px;letter-spacing:-0.075px;"><span class="y">14.01.2015 10:32</span></div>
<div class="f " style="left:798px;top:711px;width:115px;height:23px;letter-spacing:-0.013px;"><span class="y">WITTWER</span></div>
<div class="t" style="left:934px;top:714.5px;letter-spacing:-0.150px;">Geändert</div>
<div class="f " style="left:996px;top:711px;width:116px;height:23px;letter-spacing:-0.075px;"><span class="y">14.01.2015 10:32</span></div>
<div class="f " style="left:1113px;top:711px;width:115px;height:23px;letter-spacing:-0.013px;"><span class="y">WITTWER</span></div>
</body></html>
